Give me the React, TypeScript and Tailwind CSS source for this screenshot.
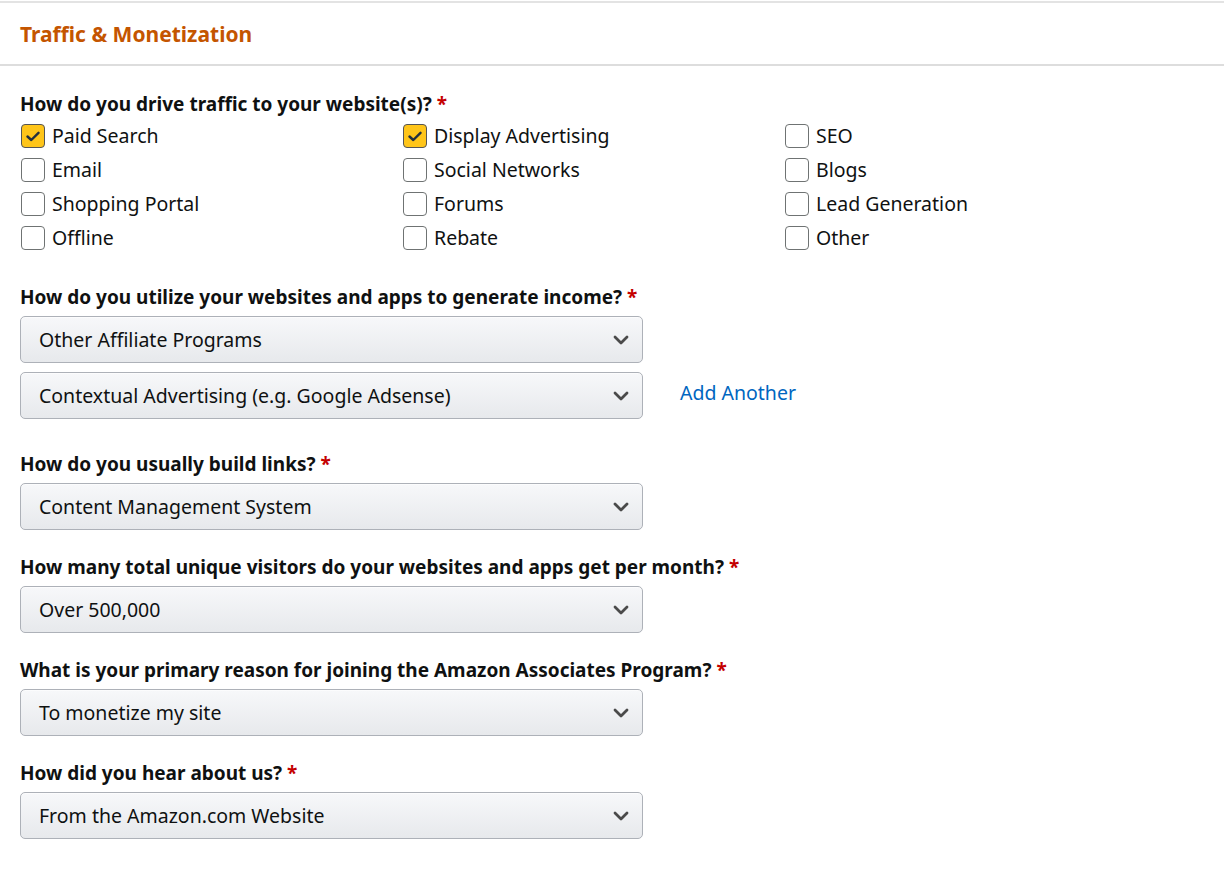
import React from "react";

const font = { fontFamily: '"Noto Sans", "Open Sans", Arial, sans-serif' };

function Checkbox({ label, checked }: { label: string; checked?: boolean }) {
  return (
    <label className="flex items-center h-[34px]">
      {checked ? (
        <span className="w-6 h-6 rounded-[4px] border border-[#555555] bg-[#ffc519] flex items-center justify-center shrink-0">
          <svg width="14" height="11" viewBox="0 0 14 11" fill="none">
            <path d="M1.5 5.5 L5.3 9 L12.5 1.8" stroke="#232f3e" strokeWidth="2.4" strokeLinecap="round" strokeLinejoin="round" />
          </svg>
        </span>
      ) : (
        <span className="w-6 h-6 rounded-[4px] border border-[#6f7373] bg-white shrink-0" />
      )}
      <span className="ml-[7px] text-[19.5px] text-[#0f1111] leading-none">{label}</span>
    </label>
  );
}

function Select({ value }: { value: string }) {
  return (
    <div className="w-[623px] h-[47px] rounded-[5px] border border-[#adb1b8] bg-gradient-to-b from-[#f7f8fa] to-[#e7e9ec] flex items-center justify-between pl-[18px] pr-[13px] shadow-[0_1px_0_rgba(255,255,255,0.6)_inset]">
      <span className="text-[19.5px] text-[#0f1111]">{value}</span>
      <svg width="16" height="10" viewBox="0 0 16 10" fill="none">
        <path d="M2 2 L8 8 L14 2" stroke="#4a4a4a" strokeWidth="2.8" strokeLinecap="round" strokeLinejoin="round" />
      </svg>
    </div>
  );
}

function Question({ children }: { children: React.ReactNode }) {
  return (
    <div className="text-[19px] font-bold text-[#0f1111] leading-6">
      {children} <span className="text-[#c40000]">*</span>
    </div>
  );
}

export default function App() {
  return (
    <div className="w-[1224px] h-[878px] bg-white" style={font}>
      <div className="pt-px">
        <div className="border-t-2 border-[#e3e3e3] h-[65px] border-b-2 border-b-[#dddddd] flex items-center px-5 pt-0.5">
          <h2 className="text-[21px] font-bold text-[#c45500] leading-none">Traffic &amp; Monetization</h2>
        </div>
      </div>
      <div className="px-5 pt-[26px]">
        <Question>How do you drive traffic to your website(s)?</Question>
        <div className="grid grid-cols-[382px_382px_1fr] mt-[3px] pl-px">
          <Checkbox label="Paid Search" checked />
          <Checkbox label="Display Advertising" checked />
          <Checkbox label="SEO" />
          <Checkbox label="Email" />
          <Checkbox label="Social Networks" />
          <Checkbox label="Blogs" />
          <Checkbox label="Shopping Portal" />
          <Checkbox label="Forums" />
          <Checkbox label="Lead Generation" />
          <Checkbox label="Offline" />
          <Checkbox label="Rebate" />
          <Checkbox label="Other" />
        </div>

        <div className="mt-[30px]">
          <Question>How do you utilize your websites and apps to generate income?</Question>
        </div>
        <div className="mt-[7px] flex flex-col gap-[9px]">
          <Select value="Other Affiliate Programs" />
          <div className="flex items-center">
            <Select value="Contextual Advertising (e.g. Google Adsense)" />
            <a className="ml-[37px] text-[19.5px] text-[#0066c0] -mt-[5px]">Add Another</a>
          </div>
        </div>

        <div className="mt-[33px]">
          <Question>How do you usually build links?</Question>
        </div>
        <div className="mt-[7px]">
          <Select value="Content Management System" />
        </div>

        <div className="mt-[25px]">
          <Question>How many total unique visitors do your websites and apps get per month?</Question>
        </div>
        <div className="mt-[7px]">
          <Select value="Over 500,000" />
        </div>

        <div className="mt-[25px]">
          <Question>What is your primary reason for joining the Amazon Associates Program?</Question>
        </div>
        <div className="mt-[7px]">
          <Select value="To monetize my site" />
        </div>

        <div className="mt-[25px]">
          <Question>How did you hear about us?</Question>
        </div>
        <div className="mt-[7px]">
          <Select value="From the Amazon.com Website" />
        </div>
      </div>
    </div>
  );
}
